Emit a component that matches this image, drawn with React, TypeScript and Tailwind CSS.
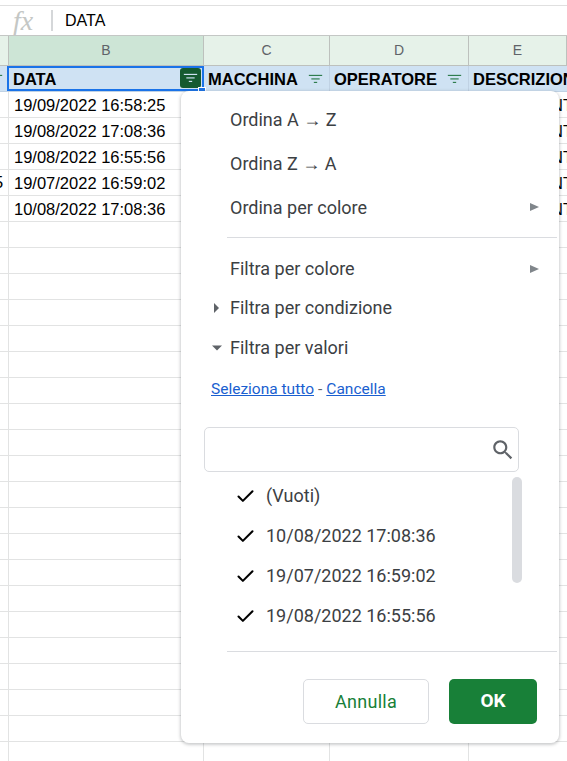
import type { ReactNode } from "react";
import { Check } from "lucide-react";

const colWidths = ["w-[9px]", "w-[195px]", "w-[126px]", "w-[139px]", "w-[98px]"];
const dates = [
  "19/09/2022 16:58:25",
  "19/08/2022 17:08:36",
  "19/08/2022 16:55:56",
  "19/07/2022 16:59:02",
  "10/08/2022 17:08:36",
];
const values = ["(Vuoti)", "10/08/2022 17:08:36", "19/07/2022 16:59:02", "19/08/2022 16:55:56"];

function FilterIcon({ className }: { className: string }) {
  return (
    <svg viewBox="0 0 18 12" className={className} fill="currentColor">
      <rect x="1" y="1" width="16" height="1.4" />
      <rect x="4" y="5.2" width="10" height="1.4" />
      <rect x="7" y="9.4" width="4" height="1.4" />
    </svg>
  );
}

function SearchIcon() {
  return (
    <svg viewBox="0 0 24 24" className="h-[26px] w-[26px] text-[#5f6368]" fill="currentColor">
      <path d="M15.5 14h-.79l-.28-.27C15.41 12.59 16 11.11 16 9.5 16 5.91 13.09 3 9.5 3S3 5.91 3 9.5 5.91 16 9.5 16c1.61 0 3.09-.59 4.23-1.57l.27.28v.79l5 4.99L20.49 19l-4.99-5zm-6 0C7.01 14 5 11.99 5 9.5S7.01 5 9.5 5 14 7.01 14 9.5 11.99 14 9.5 14z" />
    </svg>
  );
}

function Arrow() {
  return <span className="font-['Liberation_Sans',sans-serif]">→</span>;
}

function ColHead({ label, index, active }: { label: string; index: number; active?: boolean }) {
  return (
    <div
      className={`${colWidths[index]} flex shrink-0 items-center justify-center border-r border-[#bdc1bd] text-[14px] text-[#5f6368] ${
        active ? "bg-[#cde5d6]" : "bg-[#e6f2e9]"
      }`}
    >
      {label}
    </div>
  );
}

function HeadCell({ label, index, icon }: { label: string; index: number; icon?: boolean }) {
  return (
    <div className={`${colWidths[index]} flex shrink-0 items-center overflow-hidden whitespace-nowrap border-r border-[#c0d2e4] pl-[4px] pr-[6px] pt-[1px]`}>
      <span className="min-w-0 flex-1 text-[16.5px] font-bold text-black">{label}</span>
      {icon && <FilterIcon className="h-[10px] w-[15px] shrink-0 text-[#2f7d4f]" />}
    </div>
  );
}

function GridRow({ date, partA, partE }: { date?: string; partA?: string; partE?: boolean }) {
  return (
    <div className="flex h-[26px] border-b border-[#e2e3e3] text-[16.5px] text-black">
      <div className={`${colWidths[0]} flex shrink-0 items-center overflow-hidden border-r border-[#e2e3e3]`}>
        {partA && <span className="-ml-[6px]">{partA}</span>}
      </div>
      <div className={`${colWidths[1]} flex shrink-0 items-center border-r border-[#e2e3e3] pl-[5px] pt-[1px]`}>{date}</div>
      <div className={`${colWidths[2]} shrink-0 border-r border-[#e2e3e3]`} />
      <div className={`${colWidths[3]} shrink-0 border-r border-[#e2e3e3]`} />
      <div className={`${colWidths[4]} flex shrink-0 items-center overflow-hidden whitespace-nowrap pt-[1px]`}>
        {partE && <span className="pl-[82px]">NT</span>}
      </div>
    </div>
  );
}

function MenuRow({ label, className, arrow, caret }: { label: ReactNode; className: string; arrow?: boolean; caret?: "right" | "down" }) {
  return (
    <div className={`relative flex items-center pl-[49px] pr-[20px] text-[18px] text-[#3c4043] ${className}`}>
      {caret === "right" && (
        <span className="absolute left-[33px] top-1/2 h-0 w-0 -translate-y-1/2 border-y-[5px] border-l-[5px] border-y-transparent border-l-[#5f6368]" />
      )}
      {caret === "down" && (
        <span className="absolute left-[31px] top-1/2 h-0 w-0 -translate-y-1/2 border-x-[5px] border-t-[5px] border-x-transparent border-t-[#5f6368]" />
      )}
      <span className="flex-1">{label}</span>
      {arrow && <span className="h-0 w-0 border-y-[4px] border-l-[9px] border-y-transparent border-l-[#80868b]" />}
    </div>
  );
}

function FilterMenu() {
  return (
    <div className="absolute left-[181px] top-[91px] h-[652px] w-[378px] rounded-[8px] bg-white font-['Roboto',sans-serif] shadow-[0_1px_3px_1px_rgba(60,64,67,0.25)]">
      <MenuRow label={<>Ordina A <Arrow /> Z</>} className="mt-[8px] h-[44px] pb-[2px]" />
      <MenuRow label={<>Ordina Z <Arrow /> A</>} className="h-[44px] pb-[2px]" />
      <MenuRow label="Ordina per colore" className="h-[44px] pb-[4px]" arrow />
      <div className="ml-[46px] mr-[2px] mt-[6px] h-px bg-[#dadce0]" />
      <MenuRow label="Filtra per colore" className="mt-[11px] h-[39px]" arrow />
      <MenuRow label="Filtra per condizione" className="h-[40px] pb-[2px]" caret="right" />
      <MenuRow label="Filtra per valori" className="h-[40px] pb-[2px]" caret="down" />
      <div className="mt-[12px] flex h-[20px] items-center pl-[30px] text-[15.5px] text-[#5f6368]">
        <a className="text-[#1a5fd0] underline">Seleziona tutto</a>
        <span className="mx-[4px]">-</span>
        <a className="text-[#1a5fd0] underline">Cancella</a>
      </div>
      <div className="ml-[23px] mt-[27px] flex h-[45px] w-[315px] items-center justify-end rounded-[5px] border border-[#dadce0] pr-[2px]">
        <SearchIcon />
      </div>
      <div className="relative mt-[5px] h-[160px]">
        {values.map((value) => (
          <div key={value} className="flex h-[40px] items-center pb-[4px] pl-[54px] text-[18px] text-[#3c4043]">
            <Check className="mr-[10px] mt-[2px] h-[21px] w-[21px] text-black" strokeWidth={2.4} />
            {value}
          </div>
        ))}
        <div className="absolute left-[331px] top-0 h-[106px] w-[10px] rounded-full bg-[#dadce0]" />
      </div>
      <div className="ml-[46px] mr-[2px] mt-[14px] h-px bg-[#dadce0]" />
      <div className="mt-[27px] flex justify-end gap-[20px] pr-[22px]">
        <button className="h-[45px] w-[126px] rounded-[5px] border border-[#dadce0] bg-white text-[18px] font-[450] tracking-[0.3px] text-[#188038]">
          Annulla
        </button>
        <button className="h-[45px] w-[88px] rounded-[5px] bg-[#188038] text-[19px] font-bold text-white">OK</button>
      </div>
    </div>
  );
}

export default function App() {
  return (
    <div className="relative h-[761px] w-[567px] overflow-hidden bg-white font-['Liberation_Sans',sans-serif]">
      <div className="h-[6px] border-b border-[#e0e0e0]" />
      {/* formula bar */}
      <div className="flex h-[30px] items-center border-b border-[#c4c7c5]">
        <span className="ml-[13px] w-[24px] font-['Liberation_Serif',serif] text-[28px] italic leading-none text-[#c4c7c5]">fx</span>
        <div className="ml-[14px] h-[21px] w-[2px] bg-[#d5d7d9]" />
        <span className="ml-[12px] text-[16px] text-black">DATA</span>
      </div>
      {/* column letters */}
      <div className="flex h-[30px] border-b border-[#bdc1bd]">
        <ColHead label="" index={0} />
        <ColHead label="B" index={1} active />
        <ColHead label="C" index={2} />
        <ColHead label="D" index={3} />
        <ColHead label="E" index={4} />
      </div>
      {/* header row */}
      <div className="relative flex h-[26px] border-b border-[#c0d2e4] bg-[#cfe2f3]">
        <div className={`${colWidths[0]} flex shrink-0 items-center overflow-hidden border-r border-[#c0d2e4]`}>
          <FilterIcon className="-ml-[12px] h-[10px] w-[15px] shrink-0 text-[#2f7d4f]" />
        </div>
        <HeadCell label="DATA" index={1} />
        <HeadCell label="MACCHINA" index={2} icon />
        <HeadCell label="OPERATORE" index={3} icon />
        <div className={`${colWidths[4]} flex shrink-0 items-center overflow-hidden whitespace-nowrap pl-[4px] pt-[1px] text-[16.5px] font-bold text-black`}>
          DESCRIZIONE
        </div>
        {/* selected cell outline and filter button */}
        <div className="absolute left-[7px] top-0 h-[25px] w-[197px] border-2 border-[#1a73e8]" />
        <div className="absolute left-[180px] top-[2px] flex h-[20px] w-[21px] items-center justify-center rounded-[3px] bg-[#155a30]">
          <FilterIcon className="h-[10px] w-[15px] text-[#cfe2f3]" />
        </div>
        <div className="absolute left-[198px] top-[21px] h-[6px] w-[8px] border border-white bg-[#1a73e8]" />
      </div>
      {dates.map((date, i) => (
        <GridRow key={date} date={date} partA={i === 3 ? "5" : undefined} partE />
      ))}
      {Array.from({ length: 21 }).map((_, i) => (
        <GridRow key={i} />
      ))}
      <FilterMenu />
    </div>
  );
}
